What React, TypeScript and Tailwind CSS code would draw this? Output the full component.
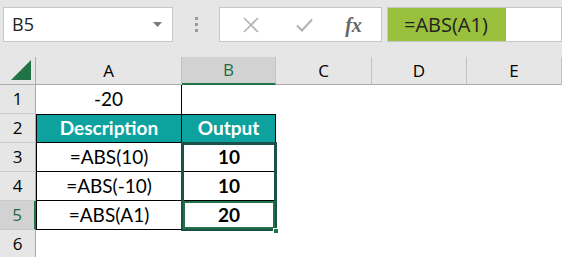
import React from 'react';

const cellFont = { fontFamily: 'Lato, "Open Sans", sans-serif' };
const uiFont = { fontFamily: '"Open Sans", "Noto Sans", sans-serif' };

const cols = ['A', 'B', 'C', 'D', 'E'];

function ColHeader({ label, active }: { label: string; active?: boolean }) {
  return (
    <div
      className={`flex items-end justify-center pb-[2px] border-r border-[#c3c3c3] text-[17px] leading-none ${
        active ? 'bg-[#d2d2d2] text-[#1e6b45] border-b-2 border-b-[#217346]' : 'bg-[#e6e6e6] text-black border-b border-b-[#ababab]'
      }`}
      style={uiFont}
    >
      <span className="mb-[3px]">{label}</span>
    </div>
  );
}

function RowHeader({ n, active }: { n: number; active?: boolean }) {
  return (
    <div
      className={`flex items-center justify-center border-b border-[#c9c9c9] text-[17px] ${
        active ? 'bg-[#d2d2d2] text-[#1e6b45] border-r-2 border-r-[#217346]' : 'bg-[#e6e6e6] text-black border-r border-r-[#ababab]'
      }`}
      style={uiFont}
    >
      {n}
    </div>
  );
}

export default function App() {
  return (
    <div className="w-[562px] h-[257px] overflow-hidden bg-[#e6e6e6] relative">
      {/* formula bar */}
      <div className="h-[57px] flex items-start pt-[7px] pl-[3px]">
        <div className="w-[170px] h-[35px] bg-white border border-[#c6c6c6] flex items-center justify-between pl-[8px] pr-[10px]">
          <span className="text-[18px] text-[#222]" style={uiFont}>B5</span>
          <svg width="9" height="5" viewBox="0 0 9 5"><path d="M0 0h9L4.5 5z" fill="#7a7a7a" /></svg>
        </div>
        <div className="w-[46px] h-[35px] flex flex-col items-center justify-center gap-[3px]">
          <span className="w-[3px] h-[3px] bg-[#9a9a9a]" />
          <span className="w-[3px] h-[3px] bg-[#9a9a9a]" />
          <span className="w-[3px] h-[3px] bg-[#9a9a9a]" />
        </div>
        <div className="w-[163px] h-[35px] bg-white border border-[#c6c6c6] flex items-center">
          <div className="w-[62px] flex justify-center">
            <svg width="16" height="16" viewBox="0 0 16 16"><path d="M1 1l14 14M15 1L1 15" stroke="#b4b4b4" strokeWidth="1.6" /></svg>
          </div>
          <div className="w-[44px] flex justify-center">
            <svg width="17" height="14" viewBox="0 0 17 14"><path d="M1 7.5l5 5L16 1.5" stroke="#b4b4b4" strokeWidth="2.2" fill="none" /></svg>
          </div>
          <div className="flex-1 flex justify-center">
            <span className="text-[20px] italic text-[#666] font-semibold" style={{ fontFamily: '"Liberation Serif", serif' }}>fx</span>
          </div>
        </div>
        <div className="ml-[5px] flex-1 h-[35px] bg-white border border-[#c6c6c6] flex">
          <div className="w-[118px] h-full bg-[#99c03c] flex items-center pl-[16px] text-[20px] text-[#222]" style={uiFont}>
            =ABS(A1)
          </div>
        </div>
      </div>

      {/* sheet grid */}
      <div className="relative grid grid-cols-[36px_146px_94px_96px_95px_95px] grid-rows-[28px_29px_29px_29px_29px_29px_29px] bg-white">
        {/* corner */}
        <div className="bg-[#e6e6e6] border-r border-b border-[#ababab] flex items-end justify-end p-[4px]">
          <svg width="20" height="20" viewBox="0 0 20 20"><path d="M20 0v20H0z" fill="#217346" /></svg>
        </div>
        {cols.map((c) => (
          <ColHeader key={c} label={c} active={c === 'B'} />
        ))}

        {/* row 1 */}
        <RowHeader n={1} />
        <div className="flex items-center justify-center text-[19px] border-r border-black" style={cellFont}>-20</div>
        <div />
        <div />
        <div />
        <div />

        {/* row 2 */}
        <RowHeader n={2} />
        <div className="bg-[#0ea29e] border border-black flex items-center justify-center text-white font-bold text-[19px]" style={cellFont}>Description</div>
        <div className="bg-[#0ea29e] border-y border-r border-black flex items-center justify-center text-white font-bold text-[19px]" style={cellFont}>Output</div>
        <div />
        <div />
        <div />

        {[
          ['=ABS(10)', '10'],
          ['=ABS(-10)', '10'],
          ['=ABS(A1)', '20'],
        ].map(([f, v], i) => (
          <React.Fragment key={i}>
            <RowHeader n={i + 3} active={i === 2} />
            <div className="border-x border-b border-black flex items-center justify-center text-[19px]" style={cellFont}>{f}</div>
            <div className="border-b border-black flex items-center justify-center text-[19px] font-bold" style={cellFont}>{v}</div>
            <div />
            <div />
            <div />
          </React.Fragment>
        ))}

        <RowHeader n={6} />
        <div />
        <div />
        <div />
        <div />
        <div />

        {/* selection outline B3:B5 and active cell B5 */}
        <div className="absolute left-[181px] top-[85px] w-[96px] h-[89px] border-[3px] border-[#1b514b] pointer-events-none" />
        <div className="absolute left-[183px] top-[144px] w-[92px] h-[28px] border-2 border-[#217346] pointer-events-none" />
        <div className="absolute left-[273px] top-[171px] w-[6px] h-[6px] bg-[#217346] border border-white pointer-events-none" />
      </div>
    </div>
  );
}
